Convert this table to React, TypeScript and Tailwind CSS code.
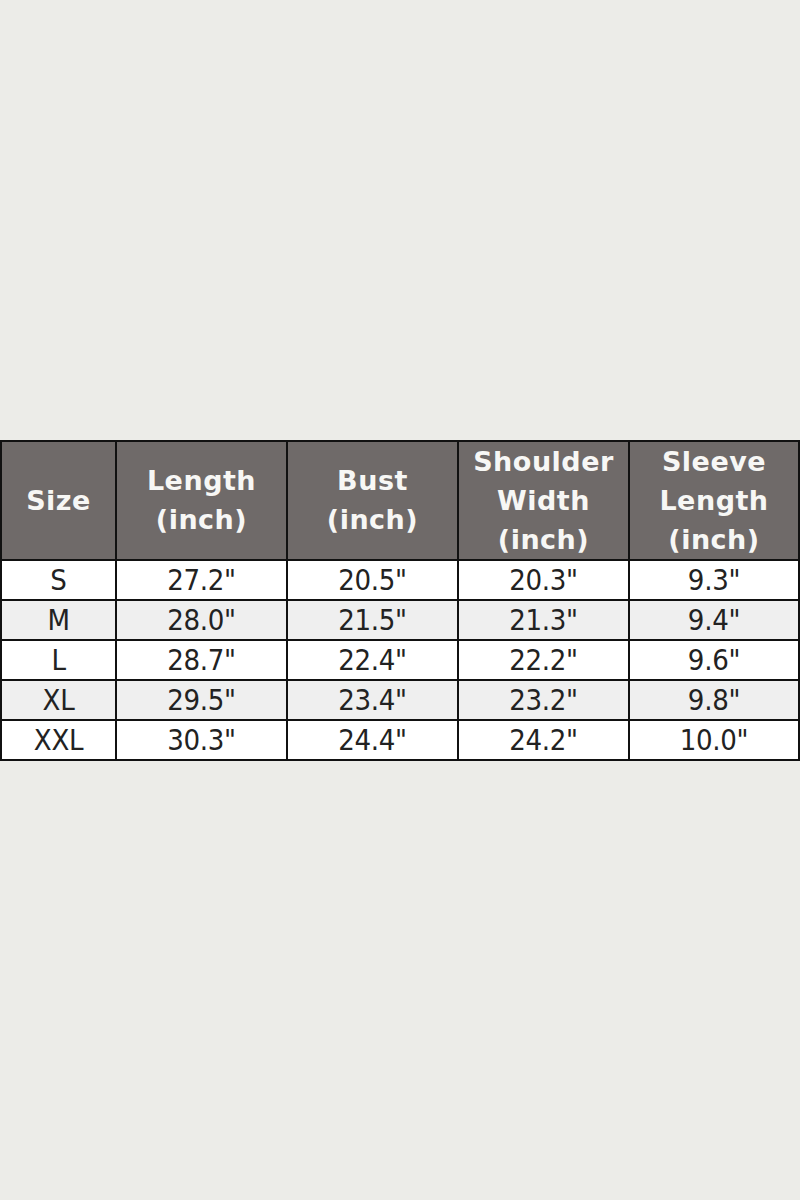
import React from 'react';

const rows = [
  ['S', '27.2"', '20.5"', '20.3"', '9.3"'],
  ['M', '28.0"', '21.5"', '21.3"', '9.4"'],
  ['L', '28.7"', '22.4"', '22.2"', '9.6"'],
  ['XL', '29.5"', '23.4"', '23.2"', '9.8"'],
  ['XXL', '30.3"', '24.4"', '24.2"', '10.0"'],
];

const heads = [['Size'], ['Length', '(inch)'], ['Bust', '(inch)'], ['Shoulder', 'Width', '(inch)'], ['Sleeve', 'Length', '(inch)']];

export default function App() {
  return (
    <div className="min-h-[1200px] w-[800px] bg-[#ecece8] flex flex-col justify-center">
      <table className="w-[800px] border-collapse table-fixed">
        <colgroup>
          <col className="w-[115px]" />
          <col className="w-[171px]" />
          <col className="w-[171px]" />
          <col className="w-[171px]" />
          <col />
        </colgroup>
        <thead>
          <tr className="h-[118px] bg-[#6f6a69]">
            {heads.map((h, i) => (
              <th
                key={i}
                className="border-2 border-[#111] p-0 text-center align-middle font-bold text-[27px] leading-[39px] text-[#f7f7f5] tracking-[0.5px] font-['DejaVu_Sans',sans-serif]"
              >
                {h.map((l) => (
                  <div key={l}>{l}</div>
                ))}
              </th>
            ))}
          </tr>
        </thead>
        <tbody>
          {rows.map((r, i) => (
            <tr key={r[0]} className={i % 2 === 1 ? 'h-[40px] bg-[#efefef]' : 'h-[40px] bg-white'}>
              {r.map((c, j) => (
                <td
                  key={j}
                  className="border-2 border-[#111] p-0 text-center align-middle text-[29px] leading-[36px] text-[#222] tracking-[-0.3px] font-['Liberation_Sans_Narrow','DejaVu_Sans_Condensed',sans-serif]"
                >
                  {c}
                </td>
              ))}
            </tr>
          ))}
        </tbody>
      </table>
    </div>
  );
}
